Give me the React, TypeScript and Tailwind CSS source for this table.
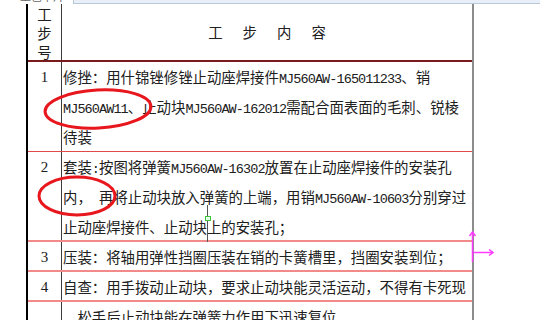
const cjk = '"Noto Sans CJK SC", "Noto Sans CJK JP", sans-serif';

function Line({ text }: { text: string }) {
  const parts = text.split(/([\x20-\x7e]+)/).filter((p) => p.length > 0);
  return (
    <div className="h-[30px] leading-[30px] whitespace-pre text-[14.4px] text-[#202020]" style={{ fontFamily: cjk }}>
      {parts.map((p, i) =>
        /^[\x20-\x7e]+$/.test(p) ? (
          <span key={i} className="font-['Liberation_Mono',monospace] text-[13.5px] tracking-[-0.9px]">
            {p}
          </span>
        ) : (
          <span key={i}>{p}</span>
        )
      )}
    </div>
  );
}

const rows = [
  {
    n: '1',
    cls: 'h-[90px] border-b border-[#e24a4a]',
    lines: ['修挫：用什锦锉修锉止动座焊接件MJ560AW-165011233、销', 'MJ560AW11、止动块MJ560AW-162012需配合面表面的毛刺、锐棱', '待装'],
  },
  {
    n: '2',
    cls: 'h-[90px] border-b-2 border-[#f28a8a]',
    lines: ['套装:按图将弹簧MJ560AW-16302放置在止动座焊接件的安装孔', '内， 再将止动块放入弹簧的上端，用销MJ560AW-10603分别穿过', '止动座焊接件、止动块上的安装孔；'],
  },
  {
    n: '3',
    cls: 'h-[30px] border-b-2 border-[#f28a8a]',
    lines: ['压装：将轴用弹性挡圈压装在销的卡簧槽里，挡圈安装到位；'],
  },
  {
    n: '4',
    cls: 'h-[30px] border-b-2 border-[#f28a8a]',
    lines: ['自查：用手拨动止动块，要求止动块能灵活运动，不得有卡死现'],
  },
  {
    n: '',
    cls: 'h-[30px]',
    lines: ['，松手后止动块能在弹簧力作用下迅速复位。'],
  },
];

export default function App() {
  return (
    <div className="relative w-[540px] h-[320px] overflow-hidden bg-white">
      {/* ruler strip at the top */}
      <div className="flex h-[4px] overflow-hidden">
        <div className="w-[73px] pl-[20px] -mt-[10px] text-[11px] leading-[12px] text-[#666]" style={{ fontFamily: cjk }}>
          工艺卡片
        </div>
        <div className="flex-1 bg-[#e8eff8] border-l border-b border-[#b9c7d8]" />
      </div>

      <div className="ml-[26px] w-[448px] border-l-2 border-r-2 border-l-black border-r-[#8c8c8c]">
        {/* header */}
        <div className="flex h-[58px] border-b-2 border-[#7a1a1a]">
          <div
            className="w-[34px] border-r border-[#3c3c3c] flex flex-col items-center justify-center text-[14.4px] leading-[19px] text-[#202020]"
            style={{ fontFamily: cjk }}
          >
            <span>工</span>
            <span>步</span>
            <span>号</span>
          </div>
          <div className="flex-1 flex items-center justify-center gap-[20px] text-[14.4px] text-[#202020]" style={{ fontFamily: cjk }}>
            <span>工</span>
            <span>步</span>
            <span>内</span>
            <span>容</span>
          </div>
        </div>

        {rows.map((r, i) => (
          <div key={i} className={`flex ${r.cls}`}>
            <div className="w-[34px] border-r border-[#3c3c3c] text-center font-['Liberation_Serif',serif] text-[15px] leading-[30px] text-[#202020]">
              {r.n}
            </div>
            <div className="flex-1 pl-[1px]">
              {r.lines.map((l, j) => (
                <Line key={j} text={l} />
              ))}
            </div>
          </div>
        ))}
      </div>

      {/* annotations drawn over the table */}
      <svg className="absolute inset-0 pointer-events-none" width="540" height="320" viewBox="0 0 540 320">
        <ellipse cx="98" cy="109" rx="53" ry="19" fill="none" stroke="#e8161d" strokeWidth="3" transform="rotate(-3 98 109)" />
        <ellipse cx="77" cy="196" rx="38" ry="19" fill="none" stroke="#e8161d" strokeWidth="3" />
        <line x1="207.5" y1="205" x2="207.5" y2="242" stroke="#555" strokeWidth="1" />
        <rect x="205.5" y="216.5" width="5" height="4" fill="#e8ffe8" stroke="#3cc43c" strokeWidth="1" />
        <g stroke="#ff3cff" strokeWidth="1.5" fill="none">
          <line x1="472.5" y1="232" x2="472.5" y2="262" />
          <polyline points="469.5,236 472.5,232 475.5,236" />
          <line x1="472.5" y1="252.5" x2="493" y2="252.5" />
          <polyline points="489,249.5 493,252.5 489,255.5" />
        </g>
      </svg>
    </div>
  );
}
